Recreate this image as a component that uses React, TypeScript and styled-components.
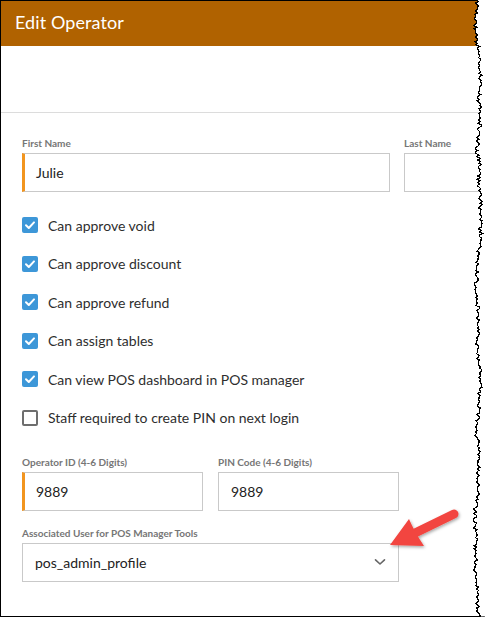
import React from "react";
import styled, { createGlobalStyle } from "styled-components";

const Global = createGlobalStyle`
  html, body { margin: 0; padding: 0; background: #fff; }
  body { font-family: Lato, "Open Sans", Arial, sans-serif; }
  * { box-sizing: border-box; }
`;

const Page = styled.div`
  position: relative;
  width: 485px;
  height: 617px;
  overflow: hidden;
  background: #fff;
`;

const Frame = styled.div`
  width: 485px;
  height: 617px;
  border: 1px solid #000;
  border-right: none;
  display: flex;
  flex-direction: column;
  overflow: hidden;
  background: #fff;
`;

const Header = styled.div`
  height: 45px;
  flex-shrink: 0;
  background: #b06200;
  display: flex;
  align-items: center;
  padding: 0 0 3px 14px;
`;

const Title = styled.h1`
  margin: 0;
  font-family: Lato, sans-serif;
  font-weight: 400;
  font-size: 18px;
  color: #fff;
  letter-spacing: 0.1px;
`;

const Toolbar = styled.div`
  height: 67px;
  flex-shrink: 0;
  border-bottom: 1px solid #dcdcdc;
`;

const Form = styled.div`
  padding: 24px 0 0 21px;
  display: flex;
  flex-direction: column;
`;

const FieldRow = styled.div<{ $cols: string; $gap: number }>`
  display: grid;
  grid-template-columns: ${(p) => p.$cols};
  column-gap: ${(p) => p.$gap}px;
`;

const Field = styled.div`
  display: flex;
  flex-direction: column;
  gap: 4px;
`;

const Label = styled.label`
  font-family: Lato, sans-serif;
  font-size: 10px;
  line-height: 12px;
  font-weight: 700;
  color: #767676;
  white-space: nowrap;
`;

const Input = styled.div<{ $accent?: boolean }>`
  height: 39px;
  border: 1px solid #c9c9c9;
  border-left: ${(p) => (p.$accent ? "3px solid #f2951f" : "1px solid #c9c9c9")};
  padding-left: ${(p) => (p.$accent ? 11 : 12)}px;
  padding-right: 12px;
  display: flex;
  align-items: center;
  justify-content: space-between;
  font-family: Lato, sans-serif;
  font-size: 14px;
  color: #222;
  background: #fff;
`;

const CheckList = styled.div`
  display: flex;
  flex-direction: column;
  gap: 18.6px;
  margin-top: 23px;
`;

const CheckRow = styled.div`
  height: 20px;
  display: flex;
  align-items: center;
  gap: 10px;
`;

const Box = styled.span<{ $checked: boolean }>`
  width: 16px;
  height: 16px;
  border-radius: 2px;
  flex-shrink: 0;
  display: flex;
  align-items: center;
  justify-content: center;
  background: ${(p) => (p.$checked ? "#3d97d8" : "#fff")};
  border: ${(p) => (p.$checked ? "none" : "2px solid #6e6e6e")};
`;

const CheckText = styled.span`
  font-family: Lato, sans-serif;
  font-size: 14px;
  color: #2e2e2e;
  white-space: nowrap;
`;

const Section = styled.div<{ $mt: number }>`
  margin-top: ${(p) => p.$mt}px;
`;

const Overlay = styled.svg`
  position: absolute;
  top: 0;
  left: 0;
  pointer-events: none;
`;

function Check({ checked, label }: { checked: boolean; label: string }) {
  return (
    <CheckRow>
      <Box $checked={checked}>
        {checked && (
          <svg width="12" height="12" viewBox="0 0 12 12">
            <path d="M2 6.3 L4.8 9 L10 3.4" fill="none" stroke="#fff" strokeWidth="2" strokeLinecap="round" strokeLinejoin="round" />
          </svg>
        )}
      </Box>
      <CheckText>{label}</CheckText>
    </CheckRow>
  );
}

function tornEdge() {
  let seed = 98765;
  const rnd = () => {
    seed = (seed * 1103515245 + 12345) % 2147483648;
    return seed / 2147483648;
  };
  const pts: [number, number][] = [];
  let base = 477;
  for (let y = 0; y <= 617; y += 1.6) {
    base += (rnd() - 0.5) * 1.6;
    if (base < 475) base = 475 + rnd() * 0.5;
    if (base > 481) base = 481 - rnd() * 0.5;
    const jit = (rnd() - 0.5) * 3.4;
    pts.push([base + jit, y]);
  }
  return pts;
}

export default function App() {
  const pts = tornEdge();
  const line = pts.map((p) => `${p[0].toFixed(1)},${p[1].toFixed(1)}`).join(" ");
  const fill = `${line} 490,617 490,0`;
  const shadow = pts.map((p) => `${(p[0] + 2).toFixed(1)},${(p[1] + 1).toFixed(1)}`).join(" ");

  return (
    <>
      <Global />
      <Page>
        <Frame>
          <Header>
            <Title>Edit Operator</Title>
          </Header>
          <Toolbar />
          <Form>
            <FieldRow $cols="368px 120px" $gap={14}>
              <Field>
                <Label>First Name</Label>
                <Input $accent>Julie</Input>
              </Field>
              <Field>
                <Label>Last Name</Label>
                <Input />
              </Field>
            </FieldRow>
            <CheckList>
              <Check checked label="Can approve void" />
              <Check checked label="Can approve discount" />
              <Check checked label="Can approve refund" />
              <Check checked label="Can assign tables" />
              <Check checked label="Can view POS dashboard in POS manager" />
              <Check checked={false} label="Staff required to create PIN on next login" />
            </CheckList>
            <Section $mt={28}>
              <FieldRow $cols="181px 181px" $gap={15}>
                <Field>
                  <Label>Operator ID (4-6 Digits)</Label>
                  <Input $accent>9889</Input>
                </Field>
                <Field>
                  <Label>PIN Code (4-6 Digits)</Label>
                  <Input>9889</Input>
                </Field>
              </FieldRow>
            </Section>
            <Section $mt={16}>
              <FieldRow $cols="377px" $gap={0}>
                <Field>
                  <Label>Associated User for POS Manager Tools</Label>
                  <Input>
                    pos_admin_profile
                    <svg width="12" height="8" viewBox="0 0 12 8">
                      <path d="M1.5 1.8 L6 6 L10.5 1.8" fill="none" stroke="#666" strokeWidth="1.6" strokeLinecap="round" strokeLinejoin="round" />
                    </svg>
                  </Input>
                </Field>
              </FieldRow>
            </Section>
          </Form>
        </Frame>
        <Overlay width="485" height="617" viewBox="0 0 485 617">
          <defs>
            <filter id="ds" x="-20%" y="-20%" width="140%" height="140%">
              <feDropShadow dx="1" dy="1.5" stdDeviation="1.5" floodColor="#000" floodOpacity="0.35" />
            </filter>
          </defs>
          <polyline points={shadow} fill="none" stroke="#c4c4c4" strokeWidth="0.7" />
          <polygon points={fill} fill="#fff" />
          <polyline points={line} fill="none" stroke="#000" strokeWidth="1.3" shapeRendering="crispEdges" />
          <g filter="url(#ds)" fill="#f2453f" stroke="none">
            <line x1="454" y1="514" x2="414" y2="533.5" stroke="#f2453f" strokeWidth="9" strokeLinecap="round" />
            <path d="M390 545 L409 519 Q414 531 424 546 Z" />
          </g>
        </Overlay>
      </Page>
    </>
  );
}
